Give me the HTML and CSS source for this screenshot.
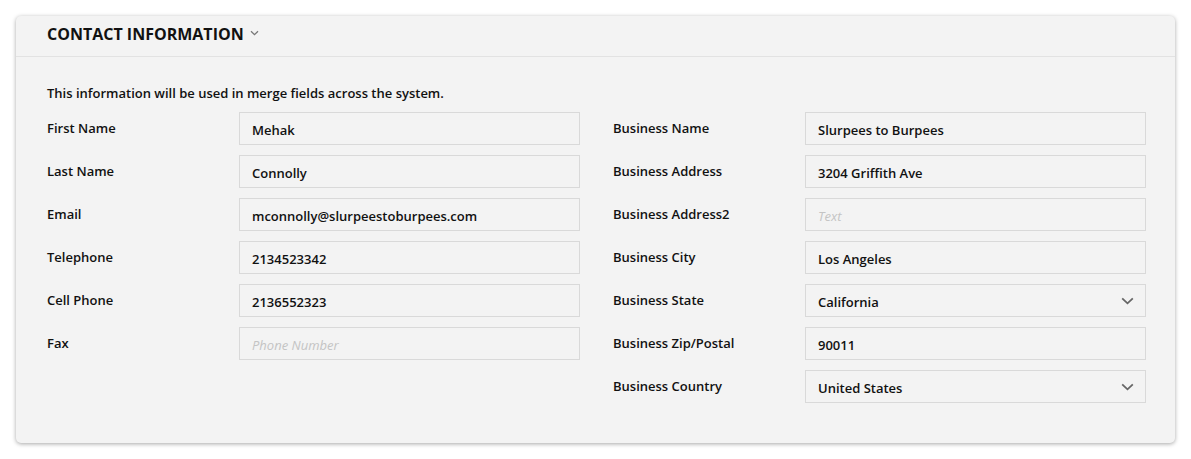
FILE: index.html
```html
<!DOCTYPE html>
<html lang="en">
<head>
<meta charset="utf-8">
<title>Contact Information</title>
<link rel="stylesheet" href="styles.css">
</head>
<body>
<section class="card">
  <header class="card-head">
    <h2 class="title">CONTACT INFORMATION</h2>
    <svg class="title-chev" width="9" height="6" viewBox="0 0 9 6"><path d="M1 1.2 L4.5 4.6 L8 1.2" fill="none" stroke="#777" stroke-width="1.3"/></svg>
  </header>
  <div class="card-body">
    <p class="desc">This information will be used in merge fields across the system.</p>
    <div class="cols">
      <div class="col">
        <div class="row"><label class="lbl">First Name</label><div class="field">Mehak</div></div>
        <div class="row"><label class="lbl">Last Name</label><div class="field">Connolly</div></div>
        <div class="row"><label class="lbl">Email</label><div class="field">mconnolly@slurpeestoburpees.com</div></div>
        <div class="row"><label class="lbl">Telephone</label><div class="field">2134523342</div></div>
        <div class="row"><label class="lbl">Cell Phone</label><div class="field">2136552323</div></div>
        <div class="row"><label class="lbl">Fax</label><div class="field ph">Phone Number</div></div>
      </div>
      <div class="col">
        <div class="row"><label class="lbl">Business Name</label><div class="field">Slurpees to Burpees</div></div>
        <div class="row"><label class="lbl">Business Address</label><div class="field">3204 Griffith Ave</div></div>
        <div class="row"><label class="lbl">Business Address2</label><div class="field ph">Text</div></div>
        <div class="row"><label class="lbl">Business City</label><div class="field">Los Angeles</div></div>
        <div class="row"><label class="lbl">Business State</label><div class="field sel"><span>California</span><svg class="chev" width="13" height="8" viewBox="0 0 13 8"><path d="M1.2 1.3 L6.5 6.3 L11.8 1.3" fill="none" stroke="#666" stroke-width="1.8"/></svg></div></div>
        <div class="row"><label class="lbl">Business Zip/Postal</label><div class="field">90011</div></div>
        <div class="row"><label class="lbl">Business Country</label><div class="field sel"><span>United States</span><svg class="chev" width="13" height="8" viewBox="0 0 13 8"><path d="M1.2 1.3 L6.5 6.3 L11.8 1.3" fill="none" stroke="#666" stroke-width="1.8"/></svg></div></div>
      </div>
    </div>
  </div>
</section>
</body>
</html>
```
FILE: styles.css
```css
* { box-sizing: border-box; }
html, body { margin: 0; background: #fff; }
body {
  padding: 16px;
  font-family: "Open Sans", "Noto Sans", sans-serif;
  color: #111;
}
.card {
  width: 1159px;
  height: 427px;
  background: #f3f3f3;
  border-radius: 5px;
  box-shadow: 0 1px 4px rgba(0,0,0,0.35);
}
.card-head {
  height: 41px;
  border-bottom: 1px solid #e2e2e2;
  display: flex;
  align-items: center;
  padding-left: 31px;
  padding-bottom: 4px;
  gap: 6px;
}
.title {
  margin: 0;
  font-size: 16px;
  font-weight: 700;
  color: #111;
}
.title-chev { margin-top: -3px; }
.card-body {
  padding: 26px 29px 0 31px;
}
.desc {
  margin: 0 0 9px;
  font-size: 13px;
  font-weight: 600;
  line-height: 20px;
}
.cols {
  display: grid;
  grid-template-columns: 533px 533px;
  column-gap: 33px;
}
.col { display: flex; flex-direction: column; gap: 10px; }
.row {
  display: grid;
  grid-template-columns: 192px 341px;
  align-items: start;
}
.lbl {
  font-size: 13px;
  font-weight: 600;
  line-height: 20px;
  padding-top: 6px;
}
.field {
  height: 33px;
  border: 1px solid #d9d9d9;
  background: #f3f3f3;
  padding: 3px 12px 0;
  display: flex;
  align-items: center;
  font-size: 13px;
  font-weight: 600;
}
.field.ph {
  color: #c4c4c4;
  font-style: italic;
  font-weight: 400;
}
.field.sel { justify-content: space-between; }
.chev { margin-right: -1px; margin-top: -2px; }
```
